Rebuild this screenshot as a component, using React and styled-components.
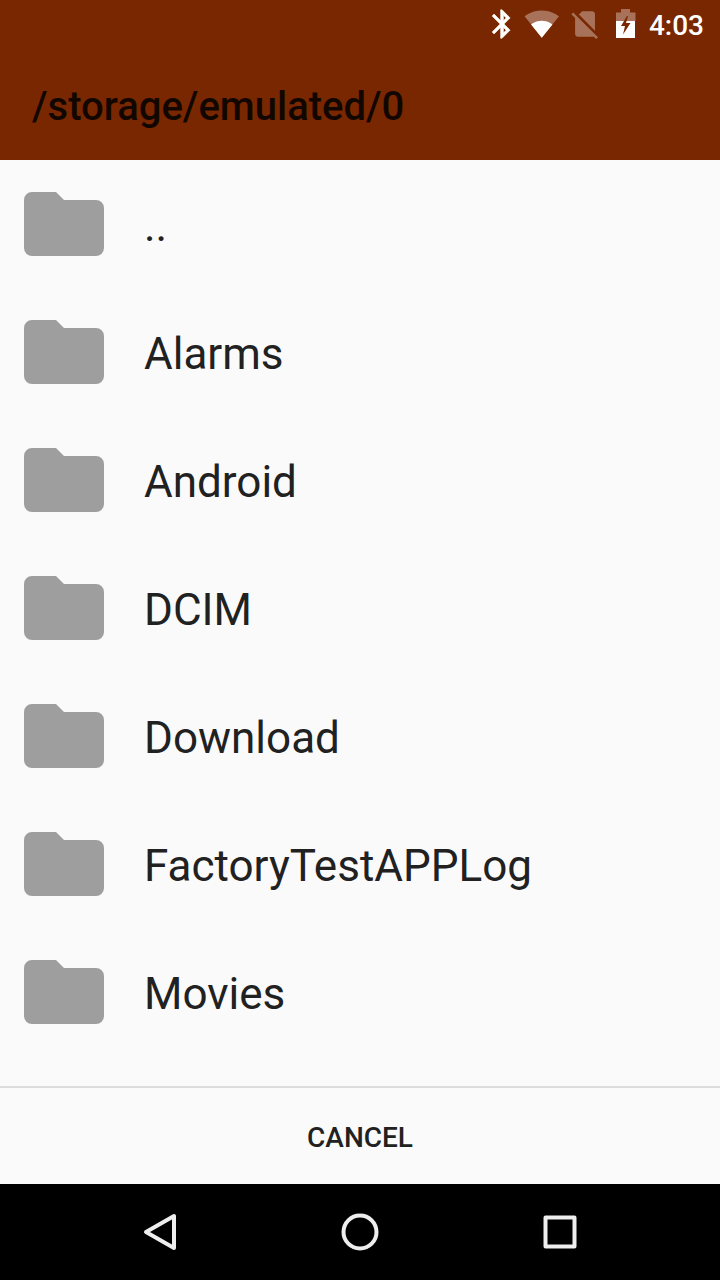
import { useState } from "react";
import styled, { createGlobalStyle } from "styled-components";

const GlobalStyle = createGlobalStyle`
   * {
      box-sizing: border-box;
   }
   body {
      margin: 0;
      background: #fafafa;
      font-family: Roboto, sans-serif;
   }
   button {
      border: 0;
      padding: 0;
      background: none;
      font-family: inherit;
      cursor: pointer;
   }
`;

const Screen = styled.div`
   height: 100vh;
   display: flex;
   flex-direction: column;
   background: #fafafa;
   color: #212121;
`;

const StatusBar = styled.div`
   display: flex;
   align-items: center;
   justify-content: flex-end;
   height: 48px;
   flex-shrink: 0;
   padding-right: 16px;
   background: #792700;
   color: #fff;
   svg {
      display: block;
      fill: currentColor;
   }
   .faded {
      opacity: 0.35;
   }
   time {
      margin-left: 8px;
      padding-top: 4px;
      font-size: 28px;
      line-height: 32px;
      font-weight: 500;
   }
`;

const TitleBar = styled.header`
   display: flex;
   align-items: center;
   height: 112px;
   flex-shrink: 0;
   padding: 6px 32px 0;
   background: #792700;
   h1 {
      margin: 0;
      font-size: 40px;
      line-height: 48px;
      font-weight: 500;
      color: #120600;
      overflow: hidden;
      text-overflow: ellipsis;
      white-space: nowrap;
   }
`;

const FolderList = styled.ul`
   flex: 1;
   min-height: 0;
   margin: 0;
   padding: 0;
   list-style: none;
   overflow: hidden auto;
`;

const FolderRow = styled.button`
   display: flex;
   align-items: center;
   gap: 40px;
   width: 100%;
   height: 128px;
   padding: 0 24px;
   color: #212121;
   text-align: left;
   svg {
      flex-shrink: 0;
      fill: #9e9e9e;
   }
   span {
      padding-top: 4px;
      font-size: 44px;
      line-height: 52px;
   }
`;

const CancelButton = styled.button`
   height: 98px;
   flex-shrink: 0;
   border-top: 2px solid #dcdcdc;
   color: #212121;
   padding-top: 4px;
   font-size: 28px;
   line-height: 32px;
   font-weight: 500;
   text-transform: uppercase;
`;

const NavBar = styled.nav`
   display: flex;
   justify-content: center;
   height: 96px;
   flex-shrink: 0;
   padding: 0 60px;
   background: #000;
   button {
      flex: 1;
      display: flex;
      align-items: center;
      justify-content: center;
   }
   svg {
      fill: none;
      stroke: #eee;
      stroke-width: 4;
      stroke-linejoin: round;
   }
`;

const folders = ["..", "Alarms", "Android", "DCIM", "Download", "FactoryTestAPPLog", "Movies"];

const BluetoothIcon = () => (
   <svg width="34" height="48" viewBox="0 0 34 48">
      <path
         transform="translate(0 7) scale(1.42)"
         stroke="currentColor"
         strokeWidth="0.4"
         d="M17.71 7.71L12 2h-1v7.59L6.41 5 5 6.41 10.59 12 5 17.59 6.41 19 11 14.41V22h1l5.71-5.71-4.3-4.29 4.3-4.29zM13 5.83l1.88 1.88L13 9.59V5.83zm1.88 10.46L13 18.17v-3.76l1.88 1.88z"
      />
   </svg>
);

const WifiIcon = () => (
   <svg width="44" height="48" viewBox="0 0 44 48">
      <g transform="translate(5 6) scale(1.48)">
         <path
            className="faded"
            d="M12.01 21.49L23.64 7c-.45-.34-4.93-4-11.64-4C5.28 3 .81 6.66.36 7l11.63 14.49.01.01.01-.01z"
         />
         <path d="M4.79 12.52l7.2 8.98H12l.01-.01 7.2-8.98C18.85 12.24 16.1 10 12 10s-6.85 2.24-7.21 2.52z" />
      </g>
   </svg>
);

const NoSimIcon = () => (
   <svg width="44" height="48" viewBox="0 0 44 48">
      <path
         className="faded"
         transform="translate(5 7) scale(1.42)"
         d="M18.99 5c0-1.1-.89-2-1.99-2h-7L7.66 5.34 19 16.68 18.99 5zM3.65 3.88L2.38 5.15 5 7.77V19c0 1.1.9 2 2 2h10.01c.35 0 .67-.1.96-.26l1.88 1.88 1.27-1.27L3.65 3.88z"
      />
   </svg>
);

const BatteryIcon = () => (
   <svg width="34" height="48" viewBox="0 0 34 48">
      <path className="faded" d="M14 9h9v3.500h5.500V21H9v-8.500h5z" />
      <path d="M9 21h19v17H9z" />
      <path fill="#792700" d="M20 16l-6 10h4l-2 8.500L23.500 23h-4.500l2-7z" />
   </svg>
);

const FolderIcon = () => (
   <svg width="80" height="64" viewBox="0 0 80 64">
      <path d="M8 0h24l8 8h32a8 8 0 0 1 8 8v40a8 8 0 0 1-8 8H8a8 8 0 0 1-8-8V8a8 8 0 0 1 8-8z" />
   </svg>
);

const App = () => {
   const [selected, setSelected] = useState(null);

   return (
      <>
         <GlobalStyle />
         <Screen>
            <StatusBar>
               <BluetoothIcon />
               <WifiIcon />
               <NoSimIcon />
               <BatteryIcon />
               <time>4:03</time>
            </StatusBar>
            <TitleBar>
               <h1>/storage/emulated/0</h1>
            </TitleBar>
            <FolderList>
               {folders.map((name) => (
                  <li key={name}>
                     <FolderRow type="button" aria-pressed={selected === name} onClick={() => setSelected(name)}>
                        <FolderIcon />
                        <span>{name}</span>
                     </FolderRow>
                  </li>
               ))}
            </FolderList>
            <CancelButton type="button" onClick={() => setSelected(null)}>Cancel</CancelButton>
            <NavBar>
               <button type="button" aria-label="Back">
                  <svg width="40" height="40" viewBox="0 0 40 40">
                     <path d="M34 4v32L6 20z" />
                  </svg>
               </button>
               <button type="button" aria-label="Home">
                  <svg width="40" height="40" viewBox="0 0 40 40">
                     <circle cx="20" cy="20" r="16.500" />
                  </svg>
               </button>
               <button type="button" aria-label="Recent apps">
                  <svg width="40" height="40" viewBox="0 0 40 40">
                     <rect x="5.500" y="5.500" width="29" height="29" />
                  </svg>
               </button>
            </NavBar>
         </Screen>
      </>
   );
};

export default App;
